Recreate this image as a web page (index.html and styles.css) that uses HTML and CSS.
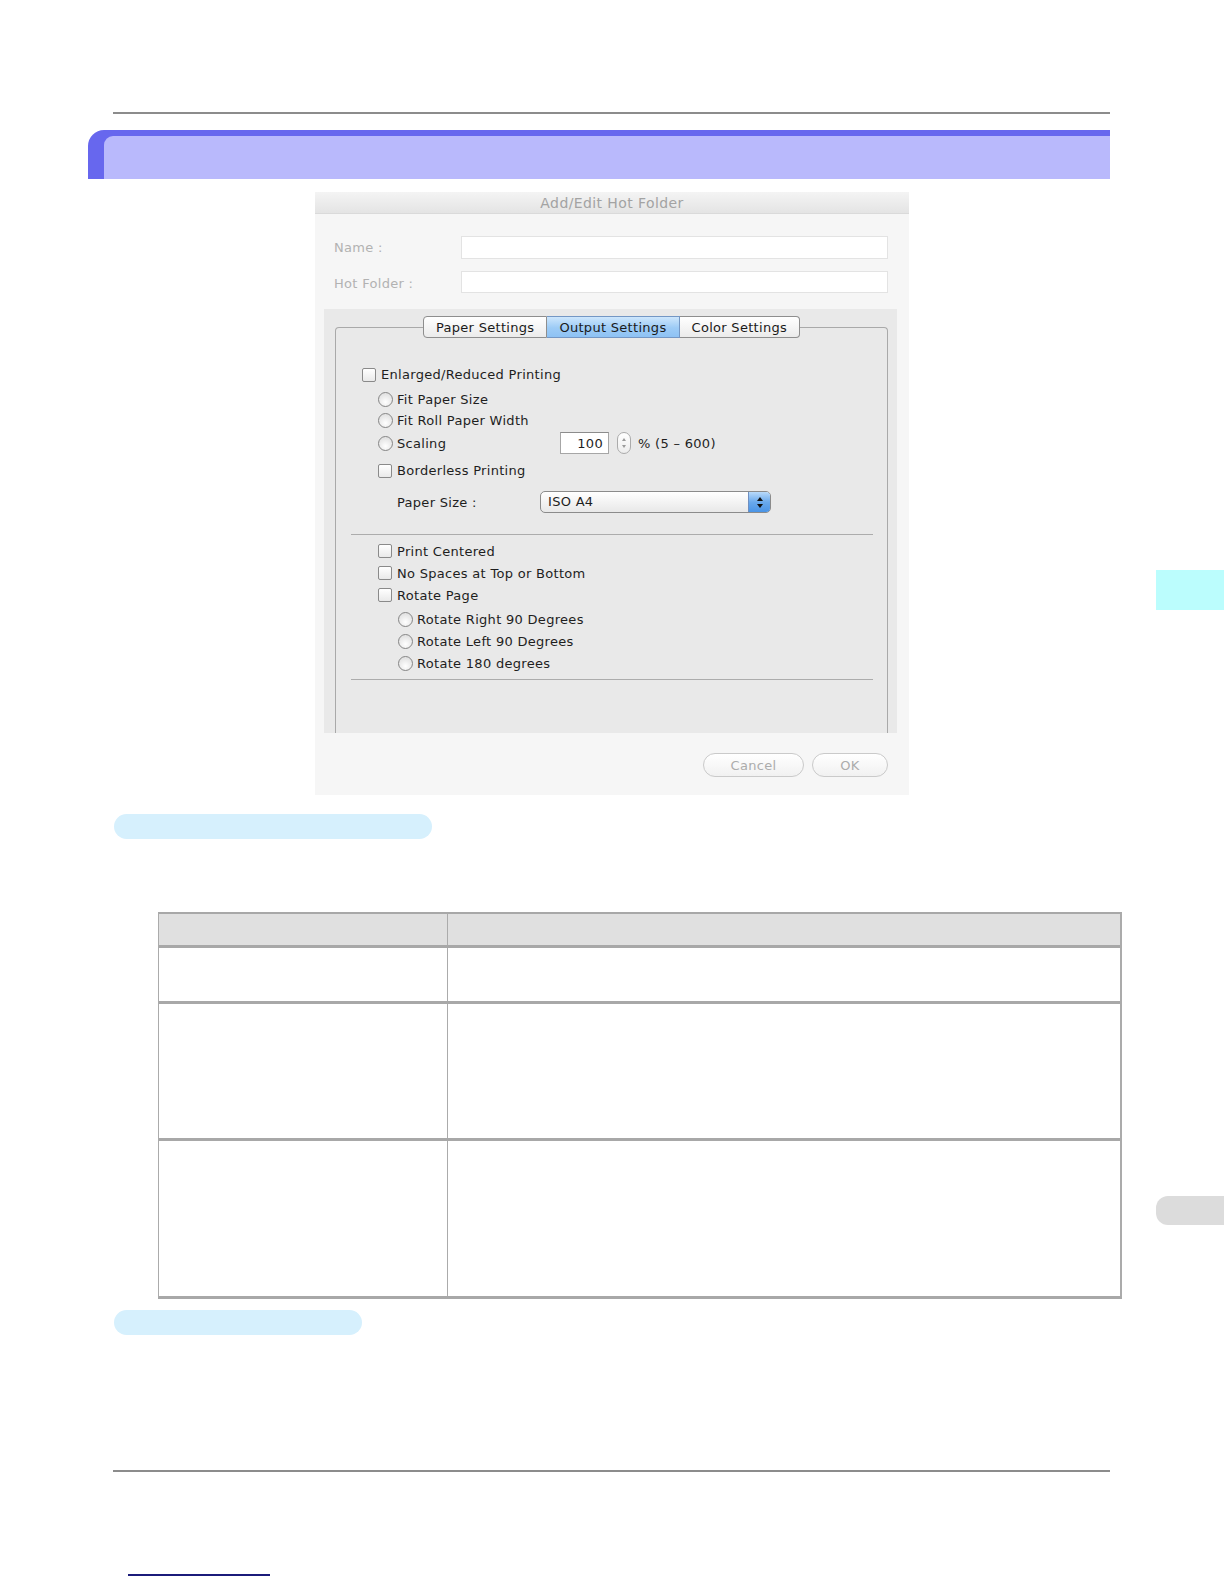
FILE: index.html
```html
<!DOCTYPE html>
<html>
<head>
<meta charset="utf-8">
<title>Add/Edit Hot Folder - Output Settings</title>
<link rel="stylesheet" href="styles.css">
</head>
<body>
<div class="page">
  <div class="rule"></div>
  <div class="title-bar"><div class="title-inner"></div></div>

  <div class="dialog">
    <div class="dlg-title">Add/Edit Hot Folder</div>
    <div class="field first"><span class="flabel">Name :</span><span class="finput tall"></span></div>
    <div class="field second"><span class="flabel">Hot Folder :</span><span class="finput"></span></div>

    <div class="panel">
      <div class="box">
        <div class="tabs">
          <span class="tab">Paper Settings</span>
          <span class="tab sel">Output Settings</span>
          <span class="tab">Color Settings</span>
        </div>

        <div class="row l1 mt26"><span class="cb"></span><span>Enlarged/Reduced Printing</span></div>
        <div class="row l2 mt4"><span class="rb"></span><span>Fit Paper Size</span></div>
        <div class="row l2"><span class="rb"></span><span>Fit Roll Paper Width</span></div>
        <div class="row l2 h22 mt1">
          <span class="rb"></span><span class="lbl-scaling">Scaling</span>
          <span class="num">100</span>
          <span class="stepper">
            <svg width="12" height="20" viewBox="0 0 12 20"><polygon points="6,5 4,8 8,8" fill="#9a9a9a"/><polygon points="6,15 4,12 8,12" fill="#9a9a9a"/></svg>
          </span>
          <span class="pct">% (5 – 600)</span>
        </div>
        <div class="row l2 mt6"><span class="cb"></span><span>Borderless Printing</span></div>
        <div class="row l2t h22 mt10">
          <span class="lbl-paper">Paper Size :</span>
          <span class="select">
            <span class="select-text">ISO A4</span>
            <span class="select-btn">
              <svg width="8" height="13" viewBox="0 0 8 13"><polygon points="4,1 1,5 7,5" fill="#111"/><polygon points="4,12 1,8 7,8" fill="#111"/></svg>
            </span>
          </span>
        </div>

        <div class="sep mt21"></div>

        <div class="row l2 h22 mt5"><span class="cb"></span><span>Print Centered</span></div>
        <div class="row l2 h22"><span class="cb"></span><span>No Spaces at Top or Bottom</span></div>
        <div class="row l2 h22"><span class="cb"></span><span>Rotate Page</span></div>
        <div class="row l3 h22 mt2"><span class="rb"></span><span>Rotate Right 90 Degrees</span></div>
        <div class="row l3 h22"><span class="rb"></span><span>Rotate Left 90 Degrees</span></div>
        <div class="row l3 h22"><span class="rb"></span><span>Rotate 180 degrees</span></div>

        <div class="sep mt5"></div>
      </div>
    </div>

    <div class="actions">
      <span class="btn cancel">Cancel</span>
      <span class="btn ok">OK</span>
    </div>
  </div>

  <div class="pill pill-one"></div>

  <div class="tbl">
    <div class="trow thead"><div class="tcell"></div><div class="tcell"></div></div>
    <div class="trow r1"><div class="tcell"></div><div class="tcell"></div></div>
    <div class="trow r2"><div class="tcell"></div><div class="tcell"></div></div>
    <div class="trow r3"><div class="tcell"></div><div class="tcell"></div></div>
  </div>

  <div class="pill pill-two"></div>

  <div class="rule bottom-rule"></div>
  <div class="link-line"></div>
</div>

<div class="thumb thumb-cyan"></div>
<div class="thumb thumb-gray"></div>
</body>
</html>
```

FILE: styles.css
```css
html, body {
  margin: 0;
  padding: 0;
}
body {
  width: 1224px;
  height: 1584px;
  background: #ffffff;
  position: relative;
  overflow: hidden;
  font-family: "DejaVu Sans", "Liberation Sans", sans-serif;
}
.page {
  padding-top: 112px;
}
.rule {
  margin-left: 113px;
  width: 997px;
  height: 2px;
  background: #8c8c8c;
}
.title-bar {
  margin: 16px 0 0 88px;
  width: 1022px;
  height: 49px;
  box-sizing: border-box;
  padding: 6px 0 0 16px;
  background: #6767ee;
  border-top-left-radius: 16px;
}
.title-inner {
  height: 43px;
  background: #b9b9fc;
  border-top-left-radius: 9px;
}

/* dialog */
.dialog {
  margin: 13px 0 0 315px;
  width: 594px;
  height: 603px;
  box-sizing: border-box;
  background: #f6f6f6;
  letter-spacing: 0.3px;
}
.dlg-title {
  height: 21px;
  line-height: 22px;
  border-bottom: 1px solid #dadada;
  background: linear-gradient(#f4f4f4, #e4e4e4);
  text-align: center;
  font-size: 14px;
  letter-spacing: 0.4px;
  color: #a3a3a3;
}
.field {
  display: flex;
  align-items: center;
  padding-left: 19px;
}
.field.first { margin-top: 22px; }
.field.second { margin-top: 12px; }
.flabel {
  width: 127px;
  font-size: 13px;
  color: #b2b2b2;
}
.field.second .flabel { padding-top: 3px; }
.finput {
  width: 427px;
  height: 22px;
  box-sizing: border-box;
  background: #ffffff;
  border: 1px solid #e3e3e3;
}
.finput.tall { height: 23px; }

.panel {
  margin: 16px 0 0 9px;
  width: 573px;
  height: 424px;
  box-sizing: border-box;
  padding: 18px 0 0 11px;
  background: #e9e9e9;
}
.box {
  width: 553px;
  height: 406px;
  box-sizing: border-box;
  border: 1px solid #a9a9a9;
  border-bottom: none;
  border-radius: 4px 4px 0 0;
}
.tabs {
  display: flex;
  justify-content: center;
  margin-top: -12px;
  height: 22px;
}
.tab {
  height: 22px;
  box-sizing: border-box;
  padding: 0 12px;
  border: 1px solid #8e8e8e;
  background: linear-gradient(#ffffff, #ebebeb);
  font-size: 13px;
  line-height: 21px;
  color: #1a1a1a;
}
.tab + .tab { border-left: none; }
.tab:first-child { border-radius: 4px 0 0 4px; }
.tab:last-child { border-radius: 0 4px 4px 0; }
.tab.sel {
  background: linear-gradient(#cde6fc, #9ccbf6 55%, #8ec2f4);
  border-color: #7497c4;
}

.row {
  display: flex;
  align-items: center;
  height: 21px;
  font-size: 13px;
  color: #1e1e1e;
}
.h22 { height: 22px; }
.l1 { padding-left: 26px; }
.l2 { padding-left: 42px; }
.l2t { padding-left: 61px; }
.l3 { padding-left: 62px; }
.mt1 { margin-top: 1px; }
.mt2 { margin-top: 2px; }
.mt4 { margin-top: 4px; }
.mt5 { margin-top: 5px; }
.mt6 { margin-top: 6px; }
.mt10 { margin-top: 10px; }
.mt21 { margin-top: 21px; }
.mt26 { margin-top: 26px; }

.cb {
  flex: none;
  width: 14px;
  height: 14px;
  box-sizing: border-box;
  margin-right: 5px;
  border: 1px solid #8a8a8a;
  border-radius: 2px;
  background: linear-gradient(#ffffff, #e9e9e9);
}
.rb {
  flex: none;
  width: 15px;
  height: 15px;
  box-sizing: border-box;
  margin-right: 4px;
  border: 1px solid #858585;
  border-radius: 50%;
  background: radial-gradient(circle at 50% 70%, #ffffff, #e4e4e4 70%);
}
.lbl-scaling { width: 163px; }
.num {
  width: 49px;
  height: 22px;
  box-sizing: border-box;
  padding-right: 5px;
  border: 1px solid #a6a6a6;
  border-top-color: #8c8c8c;
  background: #ffffff;
  text-align: right;
  line-height: 21px;
}
.stepper {
  margin-left: 8px;
  width: 14px;
  height: 22px;
  box-sizing: border-box;
  border: 1px solid #ababab;
  border-radius: 7px;
  background: linear-gradient(#ffffff, #ededed);
  display: flex;
  align-items: center;
  justify-content: center;
}
.pct { margin-left: 7px; }
.lbl-paper { width: 143px; }
.select {
  display: flex;
  width: 231px;
  height: 22px;
  box-sizing: border-box;
  border: 1px solid #8b8b8b;
  border-radius: 5px;
  background: linear-gradient(#ffffff, #e8e8e8);
  overflow: hidden;
}
.select-text {
  flex: 1;
  padding-left: 7px;
  line-height: 20px;
}
.select-btn {
  width: 21px;
  border-left: 1px solid #6f8fc0;
  background: linear-gradient(#b9dafa, #6aa9ec 50%, #4a94e6);
  display: flex;
  align-items: center;
  justify-content: center;
}
.sep {
  margin-left: 15px;
  margin-right: 14px;
  height: 1px;
  background: #acacac;
}

.actions {
  display: flex;
  justify-content: flex-end;
  gap: 8px;
  margin-top: 20px;
  padding-right: 21px;
}
.btn {
  height: 24px;
  box-sizing: border-box;
  border: 1px solid #cacaca;
  border-radius: 12px;
  background: linear-gradient(#ffffff, #f1f1f1);
  font-size: 13px;
  color: #acacac;
  display: flex;
  align-items: center;
  justify-content: center;
}
.btn.cancel { width: 101px; }
.btn.ok { width: 76px; }

/* page elements */
.pill {
  margin-left: 114px;
  height: 25px;
  border-radius: 13px;
  background: #d6f0fd;
}
.pill-one {
  margin-top: 19px;
  width: 318px;
}
.pill-two {
  margin-top: 11px;
  width: 248px;
}
.tbl {
  margin: 73px 0 0 158px;
  width: 964px;
  box-sizing: border-box;
  border-left: 1px solid #ababab;
  border-right: 2px solid #ababab;
  border-top: 2px solid #a8a8a8;
  border-bottom: 3px solid #a8a8a8;
}
.trow {
  display: grid;
  grid-template-columns: 288px 1fr;
}
.trow + .trow { border-top: 3px solid #a8a8a8; }
.tcell + .tcell { border-left: 1px solid #ababab; }
.thead { height: 31px; background: #e0e0e0; }
.r1 { height: 53px; }
.r2 { height: 134px; }
.r3 { height: 155px; }

.bottom-rule { margin-top: 135px; }
.link-line {
  margin: 102px 0 0 128px;
  width: 142px;
  height: 2px;
  background: #1b1b7a;
}

.thumb {
  position: absolute;
  left: 1156px;
  width: 68px;
}
.thumb-cyan {
  top: 570px;
  height: 40px;
  background: #bbfdfd;
}
.thumb-gray {
  top: 1196px;
  height: 29px;
  background: #dcdcdc;
  border-radius: 12px 0 0 12px;
}
```
